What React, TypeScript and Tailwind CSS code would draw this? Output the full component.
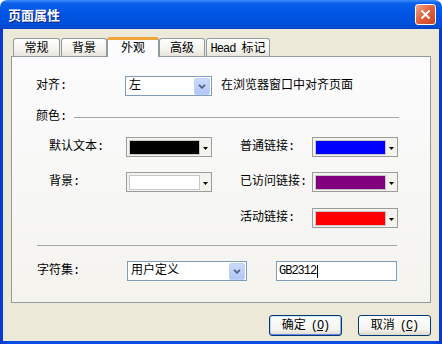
import React from "react";

const font = "font-['Liberation_Mono','Noto_Sans_CJK_SC',monospace]";

function Combo({ value, className }: { value: string; className: string }) {
  return (
    <div className={`flex h-[20px] items-center border border-[#7F9DB9] bg-white pl-[3px] pr-px ${className}`}>
      <span className="flex-1 text-[12px] leading-none">{value}</span>
      <div className="flex h-[17px] w-[16px] items-center justify-center rounded-[2px] border border-[#BFD0F6] bg-[linear-gradient(to_bottom,#CBDAFC,#B2C5F5)]">
        <svg width="8" height="5" viewBox="0 0 8 5">
          <path d="M1 0.8 L4 3.8 L7 0.8" fill="none" stroke="#4D6185" strokeWidth="1.8" />
        </svg>
      </div>
    </div>
  );
}

function ColorButton({ swatch }: { swatch: string }) {
  return (
    <div className="flex h-[20px] w-[86px] items-center border border-[#9C9C9C] bg-[#F4F3EE] pl-[2px]">
      <div className={`h-[15px] w-[71px] border border-[#C8C8C8] ${swatch}`} />
      <svg className="ml-[3px] mt-[3px]" width="5" height="3" viewBox="0 0 5 3">
        <path d="M0 0 H5 L2.5 3 Z" fill="#000" />
      </svg>
    </div>
  );
}

function Tab({ label, className }: { label: React.ReactNode; className: string }) {
  return (
    <div
      className={`flex h-[19px] items-center justify-center rounded-t-[3px] border border-b-0 border-[#919B9C] bg-[linear-gradient(to_bottom,#FFFFFF,#F3F2ED_60%,#E4E2D8)] pt-px text-[12px] leading-none ${className}`}
    >
      {label}
    </div>
  );
}

function XpButton({ text, accel, primary }: { text: string; accel: string; primary?: boolean }) {
  return (
    <div
      className={`flex h-[21px] w-[73px] items-center justify-center rounded-[3px] border border-[#003C74] bg-[linear-gradient(to_bottom,#FFFFFF,#F5F4F0_70%,#DCD8CC)] text-[12px] leading-none ${
        primary
          ? "shadow-[inset_0_1px_0_#CEE7FF,inset_0_-1px_0_#6982EE,inset_1px_0_0_#B9D1F8,inset_-1px_0_0_#8DB2E3]"
          : ""
      }`}
    >
      {text}
      <span className="ml-[5px] tracking-[-1px]">
        (<span className="underline">{accel}</span>)
      </span>
    </div>
  );
}

export default function App() {
  return (
    <div className={`flex h-[344px] w-[442px] flex-col text-black ${font}`}>
      {/* title bar */}
      <div className="flex h-[29px] items-center justify-between rounded-t-[7px] bg-[linear-gradient(to_bottom,#3D8DF8_0%,#0A5FEA_12%,#0055E5_45%,#0050DD_80%,#0044C8_100%)] pl-[8px] pr-[6px]">
        <span className="font-['Noto_Sans_CJK_SC',sans-serif] text-[13px] font-bold leading-none text-white [text-shadow:1px_1px_0_#0A1E8C]">
          页面属性
        </span>
        <div className="flex h-[21px] w-[21px] items-center justify-center rounded-[3px] border border-white bg-[linear-gradient(135deg,#F2A68C,#E2643F_45%,#C7431F)]">
          <svg width="11" height="11" viewBox="0 0 11 11">
            <path d="M1.5 1.5 L9.5 9.5 M9.5 1.5 L1.5 9.5" stroke="#fff" strokeWidth="2" />
          </svg>
        </div>
      </div>

      {/* frame */}
      <div className="flex flex-1 flex-col bg-[linear-gradient(to_right,#0837D0,#0B4BE6_2%,#0B4BE6_98%,#0837D0)] px-[3px] pb-[3px]">
        <div className="flex flex-1 flex-col bg-[#ECE9D8]">
          {/* tabs */}
          <div className="mt-[8px] flex h-[20px] items-end">
            <Tab label="常规" className="ml-[10px] w-[47px]" />
            <Tab label="背景" className="ml-[1px] w-[46px]" />
            <div className="relative z-10 flex h-[20px] w-[52px] items-center justify-center rounded-t-[3px] border-x border-t-[3px] border-x-[#919B9C] border-t-[#F0A53A] bg-[#FCFCFE] text-[12px] leading-none">
              外观
            </div>
            <Tab label="高级" className="w-[46px]" />
            <Tab
              label={
                <>
                  <span className="tracking-[-1px]">Head</span>
                  <span className="ml-[6px]">标记</span>
                </>
              }
              className="ml-[1px] w-[64px]"
            />
          </div>

          {/* panel */}
          <div className="ml-[8px] mt-[-1px] flex h-[247px] w-[420px] flex-col border border-[#919B9C] bg-[linear-gradient(to_bottom,#FCFCFE,#F4F3EE)] text-[12px]">
            <div className="mt-[19px] flex items-center pl-[24px]">
              <span className="w-[89px]">对齐:</span>
              <Combo value="左" className="w-[87px]" />
              <span className="ml-[9px]">在浏览器窗口中对齐页面</span>
            </div>

            <div className="mt-[14px] flex h-[14px] items-center pl-[24px]">
              <span className="w-[38px]">颜色:</span>
              <div className="h-px w-[325px] bg-[#A5A5A5]" />
            </div>

            <div className="mt-[13px] flex items-center pl-[37px]">
              <span className="w-[77px]">默认文本:</span>
              <ColorButton swatch="bg-black" />
              <span className="ml-[28px] w-[72px]">普通链接:</span>
              <ColorButton swatch="bg-[#0000FF]" />
            </div>

            <div className="mt-[15px] flex items-center pl-[37px]">
              <span className="w-[77px]">背景:</span>
              <ColorButton swatch="bg-white" />
              <span className="ml-[28px] w-[72px]">已访问链接:</span>
              <ColorButton swatch="bg-[#800080]" />
            </div>

            <div className="mt-[16px] flex items-center pl-[228px]">
              <span className="w-[72px]">活动链接:</span>
              <ColorButton swatch="bg-[#FF0000]" />
            </div>

            <div className="ml-[25px] mt-[17px] h-px w-[360px] bg-[#A5A5A5]" />

            <div className="mt-[15px] flex items-center pl-[25px]">
              <span className="w-[90px]">字符集:</span>
              <Combo value="用户定义" className="w-[120px]" />
              <div className="ml-[29px] flex h-[20px] w-[121px] items-center border border-[#7F9DB9] bg-white pl-[2px]">
                <span className="leading-none tracking-[-1px]">GB2312</span>
                <span className="ml-px h-[13px] w-px bg-black" />
              </div>
            </div>
          </div>

          {/* buttons */}
          <div className="mt-[12px] flex justify-end gap-[16px] pr-[8px]">
            <XpButton text="确定" accel="O" primary />
            <XpButton text="取消" accel="C" />
          </div>
        </div>
      </div>
    </div>
  );
}
